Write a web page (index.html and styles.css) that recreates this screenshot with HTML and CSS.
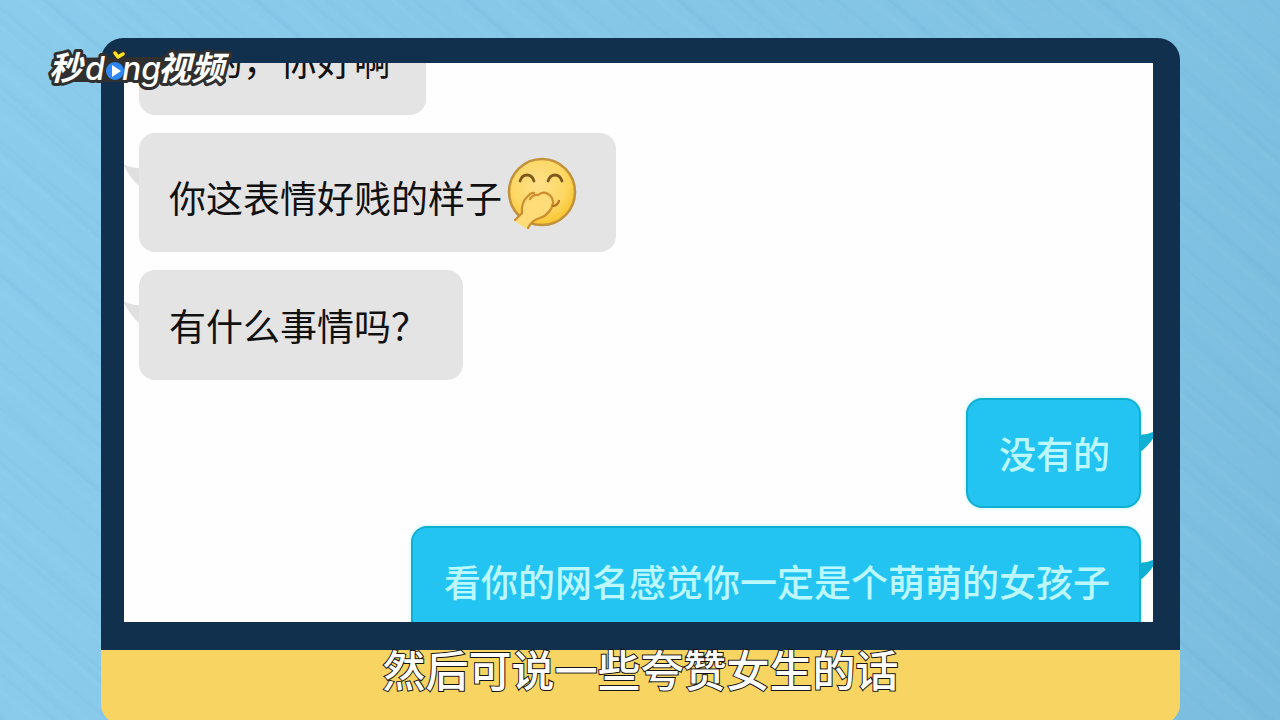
FILE: index.html
```html
<!DOCTYPE html>
<html lang="zh-CN">
<head>
<meta charset="utf-8">
<meta name="viewport" content="width=device-width, initial-scale=1">
<title>秒dong视频</title>
<link rel="stylesheet" href="styles.css">
</head>
<body>
<main class="stage">
  <section class="frame">
    <div class="screen">
      <ol class="chat">
        <li class="bubble bubble-in">好的，你好啊</li>
        <li class="bubble bubble-in">
          <svg class="tail" viewBox="0 0 16 22" aria-hidden="true"><path d="M0 0 Q7 4 16 4 V22 Q7 14 0 0Z"/></svg>
          你这表情好贱的样子<svg class="emoji" viewBox="0 0 70 74" role="img" aria-label="捂嘴笑">
            <defs>
              <radialGradient id="face" cx="45%" cy="38%" r="62%">
                <stop offset="0" stop-color="#fee08a"/>
                <stop offset="0.65" stop-color="#fdd865"/>
                <stop offset="1" stop-color="#f8c52e"/>
              </radialGradient>
            </defs>
            <circle cx="35" cy="36" r="33" fill="url(#face)" stroke="#c1913c" stroke-width="2.5"/>
            <path d="M13 25 Q15 19 20 19 Q25 19 27 25 M41 25 Q43 19 48 19 Q53 19 55 25" fill="none" stroke="#80581d" stroke-width="2.8" stroke-linecap="round"/>
            <path d="M8 65 L15 57 Q14 46 21 40 Q26 35 30 39 Q35 35 40 38 Q46 40 46 47 Q44 58 33 62 Q25 64 21 73 Q15 71 8 65Z" fill="#ffdc78"/>
            <path d="M8 64 L15 57 Q14 46 21 40 Q24 36 27 37 M23 43 Q26 38 31 39 Q36 35 41 38 Q46 41 46 47 Q44 58 33 62 Q25 64 21 72" fill="none" stroke="#cd8c2d" stroke-width="2.2" stroke-linecap="round"/>
            <path d="M46 50 Q50 50 52 45" fill="none" stroke="#b4701f" stroke-width="2.2" stroke-linecap="round"/>
          </svg>
        </li>
        <li class="bubble bubble-in">
          <svg class="tail" viewBox="0 0 16 22" aria-hidden="true"><path d="M0 0 Q7 4 16 4 V22 Q7 14 0 0Z"/></svg>
          有什么事情吗？
        </li>
        <li class="bubble bubble-out">
          <svg class="tail" viewBox="0 0 16 22" aria-hidden="true"><path d="M16 0 Q9 4 0 4 V22 Q11 14 16 4Z"/></svg>
          没有的
        </li>
        <li class="bubble bubble-out">
          <svg class="tail" viewBox="0 0 16 22" aria-hidden="true"><path d="M16 0 Q9 4 0 4 V22 Q11 14 16 4Z"/></svg>
          看你的网名感觉你一定是个萌萌的女孩子
        </li>
      </ol>
    </div>
  </section>
  <footer class="base">
    <p class="caption">然后可说一些夸赞女生的话</p>
  </footer>
</main>
<svg class="logo" viewBox="0 0 184 52" role="img" aria-label="秒dong视频">
  <path d="M6 38 L12 14 L174 12 L172 38Z" fill="#303030"/>
  <g class="logo-text">
    <text class="logo-cjk" x="1" y="36">秒</text>
    <text class="logo-latin" x="37" y="36">d</text>
    <text class="logo-latin" x="74" y="36">ng</text>
    <text class="logo-cjk" x="110" y="36">视频</text>
  </g>
  <circle cx="67" cy="27" r="9" fill="#2d87f5"/>
  <path d="M64 21 L73 27 L64 33Z" fill="#fff"/>
  <path d="M67 9 L70 13 L75 10" fill="none" stroke="#303030" stroke-width="7" stroke-linecap="round" stroke-linejoin="round"/>
  <path d="M67 9 L70 13 L75 10" fill="none" stroke="#ffe71f" stroke-width="3.5" stroke-linecap="round" stroke-linejoin="round"/>
</svg>
</body>
</html>
```

FILE: styles.css
```css
* {
  box-sizing: border-box;
}

body {
  margin: 0;
  height: 100vh;
  overflow: hidden;
  font-family: "Noto Sans CJK SC", sans-serif;
  background:
    repeating-linear-gradient(40deg, rgba(50, 120, 170, 0.03) 0 2px, transparent 5px 19px, rgba(255, 255, 255, 0.03) 22px, transparent 27px 34px),
    repeating-linear-gradient(42deg, rgba(50, 120, 170, 0.03) 0 3px, transparent 8px 47px),
    linear-gradient(100deg, #8bccec 0%, #85c6e6 50%, #80c2e2 85%, #7abcdd 100%);
}

.stage {
  display: flex;
  flex-direction: column;
  height: 100vh;
  padding: 38px 100px 0 101px;
}

.frame {
  display: flex;
  flex: 1;
  min-height: 0;
  padding: 25px 27px 28px 23px;
  border-radius: 22px 22px 0 0;
  background: #11304e;
}

.screen {
  flex: 1;
  overflow: hidden;
  background: #fefefe;
}

.chat {
  display: flex;
  flex-direction: column;
  gap: 18px;
  margin: -58px 0 0;
  padding: 0 12px 0 15px;
  list-style: none;
  font-size: 37px;
  line-height: 54px;
}

.bubble {
  position: relative;
  padding: 28px 35px 28px 30px;
  border-radius: 16px;
  white-space: nowrap;
}

.bubble-in {
  align-self: flex-start;
  background: #e5e4e5;
  color: #111;
  font-weight: 400;
}

.bubble-out {
  align-self: flex-end;
  padding: 26px 29px 26px 31px;
  border: 2px solid #10afd1;
  background: #23c4f1;
  box-shadow: 0 0 4px #b8f6ff;
  color: #bcf8ff;
  font-weight: 500;
}

.tail {
  position: absolute;
  top: 31px;
  width: 16px;
  height: 22px;
}

.bubble-in .tail {
  right: 100%;
  fill: #e0e0e1;
}

.bubble-out .tail {
  left: 100%;
  fill: #10b0d5;
}

.emoji {
  width: 70px;
  height: 74px;
  margin: -5px 4px -6px 5px;
  vertical-align: -11px;
}

.base {
  flex: none;
  height: 74px;
  margin-bottom: -4px;
  border-radius: 0 0 20px 20px;
  background: #f8d563;
}

.caption {
  margin: 0;
  color: #fff;
  font-size: 43px;
  font-weight: 500;
  line-height: 36px;
  text-align: center;
  white-space: nowrap;
  -webkit-text-stroke: 2px #151515;
  paint-order: stroke fill;
}

.logo {
  position: absolute;
  top: 44px;
  left: 48px;
  width: 184px;
  height: 52px;
  overflow: visible;
}

.logo-text {
  fill: #fff;
  stroke: #303030;
  stroke-width: 6px;
  stroke-linejoin: round;
  paint-order: stroke fill;
  font-style: italic;
}

.logo-cjk {
  font-family: "Noto Sans CJK SC", sans-serif;
  font-size: 33px;
  font-weight: 700;
}

.logo-latin {
  font-family: Inter, sans-serif;
  font-size: 32px;
  font-weight: 500;
}
```
